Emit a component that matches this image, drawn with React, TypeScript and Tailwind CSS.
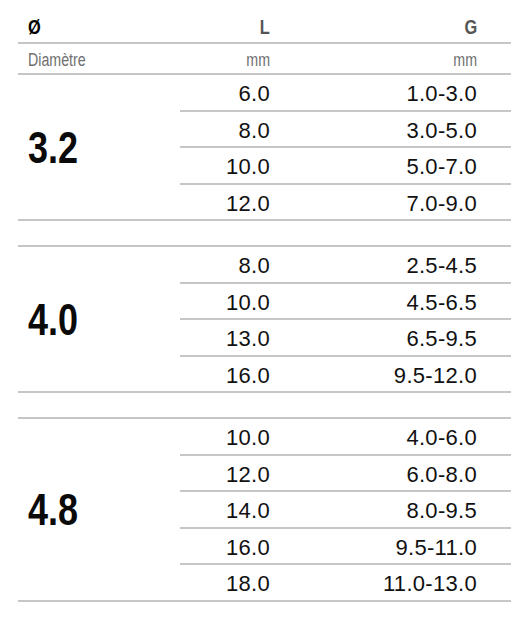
interface Group {
  d: string;
  rows: [string, string][];
}

const groups: Group[] = [
  {
    d: "3.2",
    rows: [
      ["6.0", "1.0-3.0"],
      ["8.0", "3.0-5.0"],
      ["10.0", "5.0-7.0"],
      ["12.0", "7.0-9.0"],
    ],
  },
  {
    d: "4.0",
    rows: [
      ["8.0", "2.5-4.5"],
      ["10.0", "4.5-6.5"],
      ["13.0", "6.5-9.5"],
      ["16.0", "9.5-12.0"],
    ],
  },
  {
    d: "4.8",
    rows: [
      ["10.0", "4.0-6.0"],
      ["12.0", "6.0-8.0"],
      ["14.0", "8.0-9.5"],
      ["16.0", "9.5-11.0"],
      ["18.0", "11.0-13.0"],
    ],
  },
];

export default function App() {
  return (
    <div className="w-[511px] h-[617px] bg-white pl-[18px] font-['Liberation_Sans',sans-serif]">
      <div className="flex h-[44px] items-end pb-[5px] border-b-2 border-[#c6c6c6]">
        <div className="w-[162px] pl-[10px] text-[21px] font-bold text-black leading-none">
          <span className="inline-block scale-x-[0.78] origin-left">Ø</span>
        </div>
        <div className="w-[90px] text-right text-[21px] font-bold text-[#555] leading-none">
          <span className="inline-block scale-x-[0.78] origin-right">L</span>
        </div>
        <div className="w-[207px] text-right text-[21px] font-bold text-[#555] leading-none">
          <span className="inline-block scale-x-[0.78] origin-right">G</span>
        </div>
      </div>
      <div className="flex h-[31px] items-center pt-[3px] border-b-2 border-[#c6c6c6] text-[18px] text-[#707070]">
        <div className="w-[162px] pl-[10px]">
          <span className="inline-block scale-x-[0.79] origin-left">Diamètre</span>
        </div>
        <div className="w-[90px] text-right">
          <span className="inline-block scale-x-[0.79] origin-right">mm</span>
        </div>
        <div className="w-[207px] text-right">
          <span className="inline-block scale-x-[0.79] origin-right">mm</span>
        </div>
      </div>
      {groups.map((g, gi) => (
        <div key={g.d}>
          {gi > 0 && <div className="h-[26px] border-b-2 border-[#c6c6c6]" />}
          <div className="flex border-b-2 border-[#c6c6c6]">
            <div className="w-[162px] pl-[10px] flex items-center">
              <span className="inline-block scale-x-[0.8] origin-left text-[45px] font-bold text-[#0a0a0a] leading-none">
                {g.d}
              </span>
            </div>
            <div className="flex-1 flex flex-col">
              {g.rows.map(([l, gg], ri) => (
                <div
                  key={l}
                  className={
                    ri < g.rows.length - 1
                      ? "flex h-[36.5px] items-center pt-[3px] border-b-2 border-[#c6c6c6] text-[22px] text-[#111] tracking-[0.3px]"
                      : "flex h-[34.5px] items-center pt-[3px] text-[22px] text-[#111] tracking-[0.3px]"
                  }
                >
                  <div className="w-[90px] text-right">{l}</div>
                  <div className="w-[207px] text-right">{gg}</div>
                </div>
              ))}
            </div>
          </div>
        </div>
      ))}
    </div>
  );
}
